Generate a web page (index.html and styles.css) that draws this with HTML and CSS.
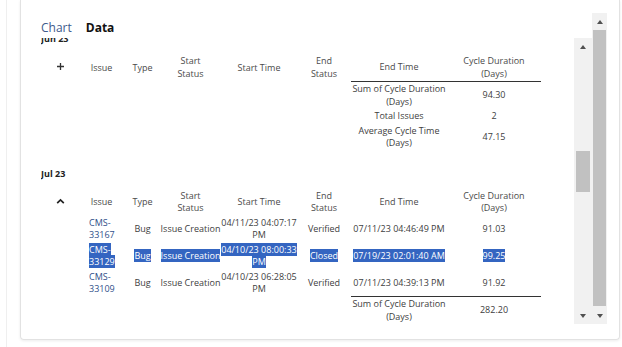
FILE: index.html
```html
<!DOCTYPE html>
<html lang="en">

<head>
  <meta charset="UTF-8">
  <meta name="viewport" content="width=device-width, initial-scale=1.0">
  <title>Cycle Time</title>
  <link rel="stylesheet" href="styles.css">
</head>

<body>
  <div class="page">
    <div class="card">
      <div class="outer">

        <div class="outer-main">
          <!-- tabs -->
          <div class="tabs">
            <span class="tab">Chart</span>
            <span class="tab active">Data</span>
          </div>

          <div class="inner">
            <div class="inner-scroll">
              <div class="scroll-content">

                <!-- Jun 23 (collapsed) -->
                <div class="month">Jun 23</div>
                <table class="grid">
                  <colgroup>
                    <col class="c-toggle"><col class="c-issue"><col class="c-type"><col class="c-sstatus">
                    <col class="c-stime"><col class="c-estatus"><col class="c-etime"><col class="c-cycle">
                  </colgroup>
                  <thead>
                    <tr>
                      <th><svg class="toggle" width="9" height="9" viewBox="0 0 9 9"><path d="M4.5 1v7M1 4.5h7" stroke="#333" stroke-width="1.3"/></svg></th>
                      <th>Issue</th>
                      <th>Type</th>
                      <th>Start<br>Status</th>
                      <th>Start Time</th>
                      <th>End<br>Status</th>
                      <th>End Time</th>
                      <th>Cycle Duration<br>(Days)</th>
                    </tr>
                  </thead>
                  <tfoot>
                    <tr class="first">
                      <td></td><td></td><td></td><td></td><td></td><td></td>
                      <td class="sum">Sum of Cycle Duration<br>(Days)</td>
                      <td class="sum">94.30</td>
                    </tr>
                    <tr>
                      <td></td><td></td><td></td><td></td><td></td><td></td>
                      <td>Total Issues</td>
                      <td>2</td>
                    </tr>
                    <tr>
                      <td></td><td></td><td></td><td></td><td></td><td></td>
                      <td>Average Cycle Time<br>(Days)</td>
                      <td>47.15</td>
                    </tr>
                  </tfoot>
                </table>

                <!-- Jul 23 (expanded) -->
                <div class="month">Jul 23</div>
                <table class="grid">
                  <colgroup>
                    <col class="c-toggle"><col class="c-issue"><col class="c-type"><col class="c-sstatus">
                    <col class="c-stime"><col class="c-estatus"><col class="c-etime"><col class="c-cycle">
                  </colgroup>
                  <thead>
                    <tr>
                      <th><svg class="toggle" width="9" height="7" viewBox="0 0 9 7"><path d="M1.2 5.2L4.5 2l3.3 3.2" fill="none" stroke="#222" stroke-width="1.7"/></svg></th>
                      <th>Issue</th>
                      <th>Type</th>
                      <th>Start<br>Status</th>
                      <th>Start Time</th>
                      <th>End<br>Status</th>
                      <th>End Time</th>
                      <th>Cycle Duration<br>(Days)</th>
                    </tr>
                  </thead>
                  <tbody>
                    <tr>
                      <td></td>
                      <td class="issue"><a href="#">CMS-33167</a></td>
                      <td>Bug</td>
                      <td>Issue Creation</td>
                      <td>04/11/23 04:07:17 PM</td>
                      <td>Verified</td>
                      <td>07/11/23 04:46:49 PM</td>
                      <td>91.03</td>
                    </tr>
                    <tr>
                      <td></td>
                      <td class="issue"><a href="#" class="sel">CMS-33129</a></td>
                      <td><span class="sel">Bug</span></td>
                      <td><span class="sel">Issue Creation</span></td>
                      <td><span class="sel">04/10/23 08:00:33 PM</span></td>
                      <td><span class="sel">Closed</span></td>
                      <td><span class="sel">07/19/23 02:01:40 AM</span></td>
                      <td><span class="sel">99.25</span></td>
                    </tr>
                    <tr>
                      <td></td>
                      <td class="issue"><a href="#">CMS-33109</a></td>
                      <td>Bug</td>
                      <td>Issue Creation</td>
                      <td>04/10/23 06:28:05 PM</td>
                      <td>Verified</td>
                      <td>07/11/23 04:39:13 PM</td>
                      <td>91.92</td>
                    </tr>
                  </tbody>
                  <tfoot>
                    <tr class="first">
                      <td></td><td></td><td></td><td></td><td></td><td></td>
                      <td class="sum">Sum of Cycle Duration<br>(Days)</td>
                      <td class="sum">282.20</td>
                    </tr>
                  </tfoot>
                </table>

              </div>
            </div>

            <!-- inner scrollbar -->
            <div class="vbar vbar-inner">
              <div class="vbar-btn"><span class="arrow-up"></span></div>
              <div class="vbar-track">
                <div class="thumb" style="margin-top: 96px; height: 41px;"></div>
              </div>
              <div class="vbar-btn"><span class="arrow-down"></span></div>
            </div>
          </div>
        </div>

        <!-- outer scrollbar -->
        <div class="vbar vbar-outer">
          <div class="vbar-btn"><span class="arrow-up"></span></div>
          <div class="vbar-track">
            <div class="thumb" style="margin-top: 0px; height: 276px;"></div>
          </div>
          <div class="vbar-btn"><span class="arrow-down"></span></div>
        </div>

      </div>
    </div>
  </div>
</body>

</html>
```

FILE: styles.css
```css
* {
  margin: 0;
  padding: 0;
  box-sizing: border-box;
}

body {
  font-family: "Open Sans", "Noto Sans", sans-serif;
  background-color: #ffffff;
  color: #333;
  padding-left: 6px;
  height: 347px;
  overflow: hidden;
}

.page {
  border-left: 1px solid #efefef;
  padding-left: 13px;
  height: 100%;
}

.card {
  width: 600px;
  height: 340px;
  border: 1px solid #e2e2e2;
  border-top: none;
  border-radius: 0 0 4px 4px;
  box-shadow: 0px 1px 3px rgba(0, 0, 0, 0.08);
  padding: 13px 12px 15px 0;
}

.outer {
  display: flex;
  height: 311px;
}

.outer-main {
  flex: 1;
  display: flex;
  flex-direction: column;
  padding-left: 20px;
}

/* tabs */
.tabs {
  height: 25px;
  display: flex;
  align-items: center;
  gap: 14px;
  padding-top: 3px;
  font-size: 12px;
}

.tab {
  color: #3d5a8c;
}

.tab.active {
  color: #111;
  font-weight: bold;
}

.inner {
  flex: 1;
  display: flex;
  min-height: 0;
}

.inner-scroll {
  flex: 1;
  overflow: hidden;
}

/* scrolled position of the data list */
.scroll-content {
  margin-top: -6px;
}

.month {
  font-size: 9px;
  font-weight: bold;
  line-height: 14px;
  color: #222;
  margin-bottom: 8px;
}

.grid {
  table-layout: fixed;
  border-collapse: collapse;
  width: 499px;
  margin-left: 1px;
  margin-bottom: 16px;
  font-size: 9px;
  line-height: 12.5px;
  text-align: center;
}

.c-toggle { width: 36px; }
.c-issue { width: 47px; }
.c-type { width: 35px; }
.c-sstatus { width: 61px; }
.c-stime { width: 76px; }
.c-estatus { width: 54px; }
.c-etime { width: 96px; }
.c-cycle { width: 94px; }

.grid th,
.grid td {
  padding: 1px 0;
  vertical-align: middle;
  font-weight: normal;
  color: #404040;
}

.grid th {
  color: #4a4a4a;
}

.grid td.issue {
  padding: 0 8px 0 11px;
  text-align: left;
}

.grid a {
  color: #2f4f8a;
  text-decoration: none;
}

.toggle {
  display: block;
  margin: 0 auto;
  position: relative;
  top: -1px;
}

.grid tfoot tr.first td.sum {
  border-top: 1px solid #333;
}

.sel {
  background-color: #3465c1;
  color: #ffffff !important;
}

/* fake scrollbars */
.vbar {
  display: flex;
  flex-direction: column;
  background-color: #f1f1f1;
}

.vbar-inner {
  width: 18px;
  padding: 0 2px;
}

.vbar-outer {
  width: 15px;
  padding: 0 1px;
}

.vbar-btn {
  height: 17px;
  display: flex;
  align-items: center;
  justify-content: center;
}

.vbar-track {
  flex: 1;
}

.thumb {
  background-color: #c1c1c1;
}

.arrow-up {
  width: 0;
  height: 0;
  border-left: 3.5px solid transparent;
  border-right: 3.5px solid transparent;
  border-bottom: 4px solid #505050;
}

.arrow-down {
  width: 0;
  height: 0;
  border-left: 3.5px solid transparent;
  border-right: 3.5px solid transparent;
  border-top: 4px solid #505050;
}
```
